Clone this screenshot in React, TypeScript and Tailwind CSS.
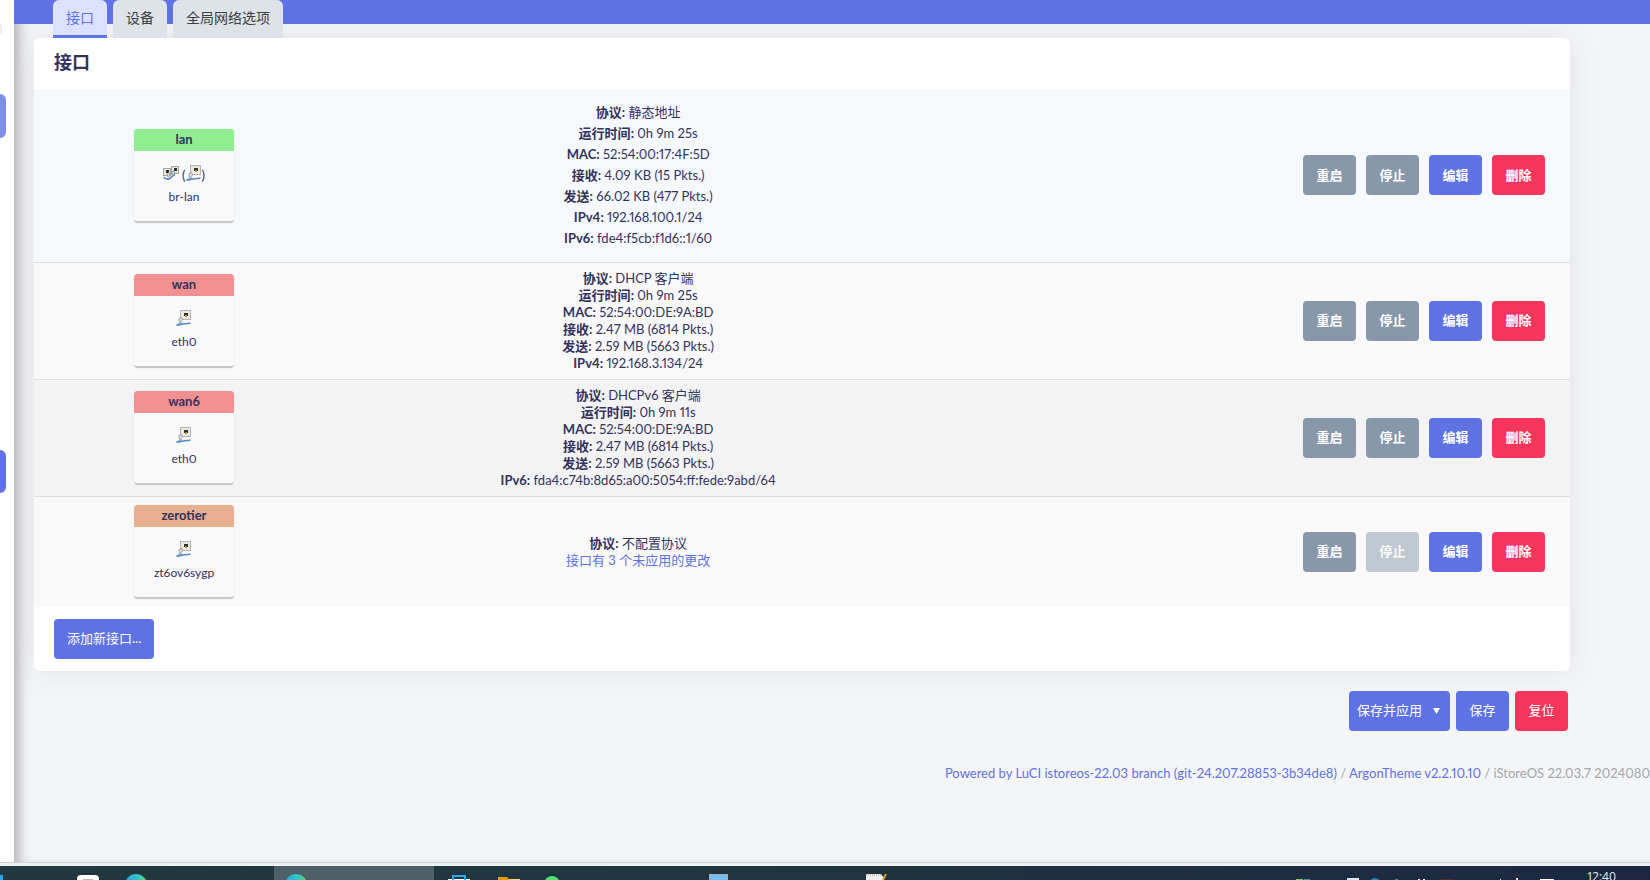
import type { ReactNode } from 'react';

type Zone = 'lan' | 'wan' | 'none';

interface NetworkInterface {
  name: string;
  device: string;
  zone: Zone;
  bridge?: boolean;
  canStop: boolean;
  details: { label: string; value: string }[];
  notice?: string;
}

const interfaces: NetworkInterface[] = [
  {
    name: 'lan',
    device: 'br-lan',
    zone: 'lan',
    bridge: true,
    canStop: true,
    details: [
      { label: '协议', value: '静态地址' },
      { label: '运行时间', value: '0h 9m 25s' },
      { label: 'MAC', value: '52:54:00:17:4F:5D' },
      { label: '接收', value: '4.09 KB (15 Pkts.)' },
      { label: '发送', value: '66.02 KB (477 Pkts.)' },
      { label: 'IPv4', value: '192.168.100.1/24' },
      { label: 'IPv6', value: 'fde4:f5cb:f1d6::1/60' },
    ],
  },
  {
    name: 'wan',
    device: 'eth0',
    zone: 'wan',
    canStop: true,
    details: [
      { label: '协议', value: 'DHCP 客户端' },
      { label: '运行时间', value: '0h 9m 25s' },
      { label: 'MAC', value: '52:54:00:DE:9A:BD' },
      { label: '接收', value: '2.47 MB (6814 Pkts.)' },
      { label: '发送', value: '2.59 MB (5663 Pkts.)' },
      { label: 'IPv4', value: '192.168.3.134/24' },
    ],
  },
  {
    name: 'wan6',
    device: 'eth0',
    zone: 'wan',
    canStop: true,
    details: [
      { label: '协议', value: 'DHCPv6 客户端' },
      { label: '运行时间', value: '0h 9m 11s' },
      { label: 'MAC', value: '52:54:00:DE:9A:BD' },
      { label: '接收', value: '2.47 MB (6814 Pkts.)' },
      { label: '发送', value: '2.59 MB (5663 Pkts.)' },
      { label: 'IPv6', value: 'fda4:c74b:8d65:a00:5054:ff:fede:9abd/64' },
    ],
  },
  {
    name: 'zerotier',
    device: 'zt6ov6sygp',
    zone: 'none',
    canStop: false,
    details: [{ label: '协议', value: '不配置协议' }],
    notice: '接口有 3 个未应用的更改',
  },
];

const zoneColors: Record<Zone, string> = {
  lan: 'bg-[#90ee90]',
  wan: 'bg-[#f09090]',
  none: 'bg-[#e8b090]',
};

const rowStyles = [
  'h-[173px] bg-[#f5f9fc] leading-[21px]',
  'h-[117px] bg-[#f9f9f9] leading-[17px]',
  'h-[117px] bg-[#f3f3f3] leading-[17px]',
  'h-[111px] bg-[#f9f9f9] leading-[17px]',
];

const buttonColors = {
  gray: 'bg-[#8898aa]',
  blue: 'bg-[#5e72e4]',
  red: 'bg-[#f5365c]',
};

function Button({
  color,
  bold = false,
  disabled = false,
  children,
}: {
  color: keyof typeof buttonColors;
  bold?: boolean;
  disabled?: boolean;
  children: ReactNode;
}) {
  return (
    <button
      type="button"
      disabled={disabled}
      className={`h-10 min-w-[53px] rounded px-[13px] text-[13px] whitespace-nowrap text-white disabled:opacity-50 ${buttonColors[color]} ${bold ? 'font-semibold' : ''}`}
    >
      {children}
    </button>
  );
}

function EthernetIcon() {
  return (
    <svg width="16" height="16" viewBox="0 0 16 16" aria-hidden="true">
      <rect x="4.5" y="0.5" width="10" height="9" fill="#e9e9e4" stroke="#b4b4b1" />
      <rect x="8" y="3" width="4" height="3" fill="#33331f" />
      <rect x="9" y="5" width="2" height="2" fill="#a3923a" />
      <path d="M0 15.5L3.500 12l3.500.5L4 15.500z" fill="#8fb2d8" />
      <path d="M3 8.500l2.500-1 1 2.500-2 2-1.500-1z" fill="#e4e4de" stroke="#8f8f8a" strokeWidth="0.8" />
      <path d="M0.500 15c4.500.3 5.500-1.300 8-1.300 2 .2 3.500 0 6-.7" fill="none" stroke="#5b8bc0" strokeWidth="1.5" />
    </svg>
  );
}

function BridgeIcon() {
  return (
    <svg width="16" height="16" viewBox="0 0 16 16" aria-hidden="true">
      <rect x="0.5" y="3.5" width="7" height="7" fill="#e9e9e4" stroke="#a3a3a0" />
      <rect x="8.5" y="1.5" width="7" height="7" fill="#e9e9e4" stroke="#a3a3a0" />
      <rect x="3" y="5" width="3" height="3" fill="#2b2b1c" />
      <rect x="11" y="3" width="3" height="3" fill="#2b2b1c" />
      <path d="M5 7.500l1.500.5.5 2-1.500 2-1.500-1zM9.500 6.500l1.500-.5.800 2-1.800 2.500-1.200-1z" fill="#dcdcd6" stroke="#85857f" strokeWidth="0.7" />
      <path d="M1 12c1 2.500 4 2.500 6 1.200C9 11.800 9.500 10.500 12 9.500" fill="none" stroke="#5b8bc0" strokeWidth="1.7" />
    </svg>
  );
}

function InterfaceBox({ iface }: { iface: NetworkInterface }) {
  return (
    <div className="mx-auto h-[94px] w-[100px] overflow-hidden rounded border-b-2 border-[#c8c8c8] bg-[#f9f9f9] shadow-[0_0_1px_rgba(0,0,0,0.2)]">
      <div className={`h-[22px] text-[13px] leading-5 font-bold ${zoneColors[iface.zone]}`}>
        {iface.name}
      </div>
      <div className="mt-[14px] flex h-4 items-end justify-center text-[13px] leading-3">
        {iface.bridge ? (
          <>
            <BridgeIcon />
            <span className="ml-[3px]">(</span>
            <EthernetIcon />
            <span>)</span>
          </>
        ) : (
          <EthernetIcon />
        )}
      </div>
      <div className="mt-[6px] text-[12px] leading-5">{iface.device}</div>
    </div>
  );
}

function EdgeIcon() {
  return (
    <svg width="22" height="22" viewBox="0 0 22 22" aria-hidden="true">
      <defs>
        <linearGradient id="edge" x1="0" x2="1">
          <stop offset="0" stopColor="#2aa5d8" />
          <stop offset="0.6" stopColor="#33c4c8" />
          <stop offset="1" stopColor="#62dc52" />
        </linearGradient>
      </defs>
      <circle cx="11" cy="11" r="11" fill="url(#edge)" />
    </svg>
  );
}

function Taskbar() {
  return (
    <footer className="flex h-[14px] shrink-0 items-start overflow-hidden bg-linear-to-r from-[#213840] via-[#20343f] to-[#1b2742]">
      <div className="mt-[9px] h-4 w-[3px] shrink-0 bg-[#29a8ee]" />
      <div className="flex w-[111px] shrink-0 justify-end pt-[9px] pr-[15px]">
        <svg width="22" height="16" aria-hidden="true">
          <rect width="22" height="22" rx="4" fill="#fff" />
          <rect x="6" y="4" width="10" height="9" fill="#b9b9b9" />
        </svg>
      </div>
      <div className="w-40 shrink-0 pt-2 pl-[11px]">
        <EdgeIcon />
      </div>
      <div className="h-full w-40 shrink-0 bg-[#4d5f67] pt-2 pl-[11px]">
        <EdgeIcon />
      </div>
      <div className="flex w-[50px] shrink-0 justify-center pt-[9px]">
        <svg width="22" height="16" aria-hidden="true">
          <path d="M0 4h22v12H0z" fill="#fff" />
          <path d="M5 5V1h12v4" fill="none" stroke="#25a8ee" strokeWidth="2" />
        </svg>
      </div>
      <div className="flex w-[50px] shrink-0 justify-center pt-[11px]">
        <svg width="22" height="16" aria-hidden="true">
          <path d="M0 0h9l2 2h11v14H0z" fill="#e29c0c" />
          <path d="M11 2h11v14H11z" fill="#fbd776" />
        </svg>
      </div>
      <div className="w-[164px] shrink-0 pt-[10px] pl-[10px]">
        <svg width="16" height="16" aria-hidden="true">
          <circle cx="8" cy="8" r="8" fill="#4be36c" />
        </svg>
      </div>
      <div className="w-[157px] shrink-0 pt-2 pl-[11px]">
        <svg width="19" height="16" aria-hidden="true">
          <rect x="0.5" y="0.5" width="18" height="17" fill="#71bdf5" stroke="#a9a9a9" />
        </svg>
      </div>
      <div className="w-[157px] shrink-0 pt-2 pl-[11px]">
        <svg width="22" height="16" aria-hidden="true">
          <path d="M0 0h15l3 4v12H0z" fill="#f0f0ee" />
          <path d="M0 1h15" stroke="#999" strokeDasharray="1 1" />
          <path d="M20 0l-3 6" stroke="#e0a02c" strokeWidth="2" />
        </svg>
      </div>
      {/* System tray */}
      <div className="ml-auto flex shrink-0 pr-[34px]">
        <svg width="258" height="14" className="mr-[33px]" aria-hidden="true">
          <path d="M0 13h7v1H0z" fill="#7ccf60" />
          <path d="M8 13h6v1H8z" fill="#35a48c" />
          <path d="M51 12h12v2H51z" fill="#d8e7ef" />
          <circle cx="79" cy="18" r="6" fill="#2384c6" />
          <path d="M99 13h3v1h-3z" fill="#4a8a55" />
          <path d="M122 13h2v1h-2zM127 13h2v1h-2z" fill="#fff" />
          <path d="M143 13h15v1h-15z" fill="#3b3430" />
          <path d="M204 13h1v1h-1zM220 12h2v2h-2z" fill="#e8e8e0" />
          <path d="M244 13h14v1h-14z" fill="#fff" />
        </svg>
        <time className="mt-[3px] font-['Open_Sans',sans-serif] text-[12px] leading-4 text-[#e8ecef]">
          12:40
        </time>
      </div>
    </footer>
  );
}

export default function App() {
  return (
    <div className="flex h-screen flex-col overflow-hidden bg-[#f4f5f7] font-['Lato','Noto_Sans_CJK_SC',sans-serif] text-[13px] text-[#32325d] proportional-nums">
      <div className="flex min-h-0 flex-1 border-b border-[#cfd0d2]">
        {/* Visible edge of the collapsed sidebar */}
        <aside className="z-10 w-[14px] shrink-0 overflow-hidden bg-white">
          <div className="mt-5 -ml-4 size-[18px] rounded-full border border-[#dcdcdc]" />
          <div className="mt-14 h-11 w-[6px] rounded-r-md bg-[#7d8fe9]" />
          <div className="mt-[312px] h-[43px] w-[6px] rounded-r-md bg-[#5e72e4]" />
        </aside>

        <main className="min-w-0 flex-1 shadow-[inset_12px_0_14px_-8px_rgba(0,0,0,0.3)]">
          <nav className="flex h-[38px] gap-[6px] bg-[linear-gradient(#5e72e4_24px,transparent_24px)] pl-[39px] text-[14px] text-[#3c4043]">
            <a href="#interfaces" className="rounded-t-md border-b-3 border-[#5e72e4] bg-[#dce1ff] px-[13px] leading-9 text-[#5e72e4]">
              接口
            </a>
            <a href="#devices" className="rounded-t-md bg-[#dde3e9] px-[13px] leading-9">
              设备
            </a>
            <a href="#globals" className="rounded-t-md bg-[#dde3e9] px-[13px] leading-9">
              全局网络选项
            </a>
          </nav>

          <section className="mr-20 ml-5 rounded-md bg-white shadow-[0_0_32px_rgba(136,152,170,0.18)]">
            <h3 className="h-[51px] pl-5 text-[18px] leading-[48px] font-bold">接口</h3>
            <table className="w-full table-fixed border-collapse text-center">
              <tbody>
                {interfaces.map((iface, i) => (
                  <tr key={iface.name} className={`border-b border-[#dddddd] last:border-b-0 ${rowStyles[i]}`}>
                    <td className="w-[300px] p-0 pt-px">
                      <InterfaceBox iface={iface} />
                    </td>
                    <td className="w-[39.6%] p-0">
                      {iface.details.map((d) => (
                        <div key={d.label}>
                          <strong>{d.label}:</strong> {d.value}
                        </div>
                      ))}
                      {iface.notice && (
                        <a href="#changes" className="text-[#5e72e4]">
                          {iface.notice}
                        </a>
                      )}
                    </td>
                    <td className="p-0 pr-[25px]">
                      <div className="flex justify-end gap-[10px]">
                        <Button color="gray" bold>重启</Button>
                        <Button color="gray" bold disabled={!iface.canStop}>停止</Button>
                        <Button color="blue" bold>编辑</Button>
                        <Button color="red" bold>删除</Button>
                      </div>
                    </td>
                  </tr>
                ))}
              </tbody>
            </table>
            <div className="px-5 py-3">
              <Button color="blue">添加新接口...</Button>
            </div>
          </section>

          <div className="mt-5 mr-[82px] flex justify-end gap-[6px]">
            <div className="flex h-10 rounded bg-[#5e72e4] text-white">
              <button type="button" className="pl-2">保存并应用</button>
              <button type="button" aria-label="▼" className="w-7">
                <svg width="7" height="6" viewBox="0 0 7 6" className="mx-auto" aria-hidden="true">
                  <path d="M0 0h7L3.500 6z" fill="currentColor" />
                </svg>
              </button>
            </div>
            <Button color="blue">保存</Button>
            <Button color="red">复位</Button>
          </div>

          <div className="mt-8 text-right leading-5 whitespace-nowrap text-[#a3a6ab]">
            <a href="#luci" className="text-[#5e72e4]">
              Powered by LuCI istoreos-22.03 branch (git-24.207.28853-3b34de8)
            </a>{' '}
            /{' '}
            <a href="#theme" className="text-[#5e72e4]">
              ArgonTheme v2.2.10.10
            </a>{' '}
            / iStoreOS 22.03.7 2024080
          </div>
        </main>
      </div>
      <div className="h-[3px] shrink-0 bg-[#f0f1f2]" />
      <Taskbar />
    </div>
  );
}
